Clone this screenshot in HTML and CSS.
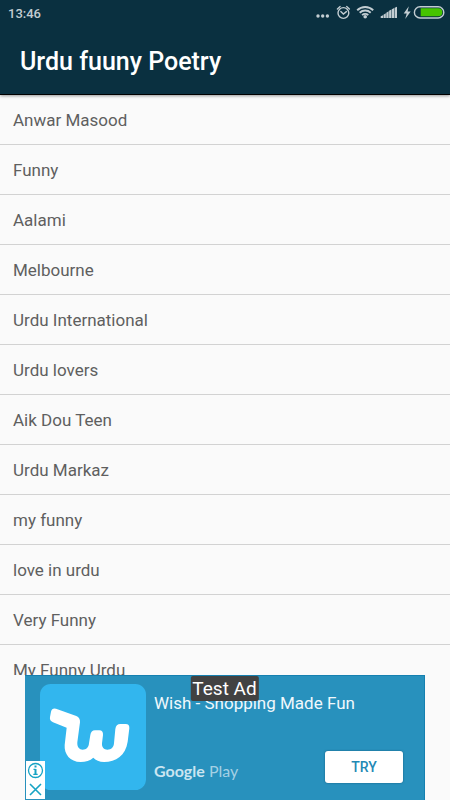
FILE: index.html
```html
<!DOCTYPE html>
<html lang="en">
<head>
<meta charset="utf-8">
<meta name="viewport" content="width=device-width, initial-scale=1">
<title>Urdu fuuny Poetry</title>
<link rel="stylesheet" href="styles.css">
</head>
<body>
<div class="screen">
  <header class="app-header">
    <div class="status-bar">
      <time class="clock">13:46</time>
      <svg class="status-icons" viewBox="0 0 132 24" role="img" aria-label="Alarm, Wi-Fi, signal, charging">
        <g fill="#c3cdd2">
          <circle cx="3" cy="15" r="1.700"/><circle cx="7.700" cy="15" r="1.700"/><circle cx="12.400" cy="15" r="1.700"/>
          <circle cx="50.200" cy="15.800" r="1.800"/>
          <path d="M65.700 17v-1.800l2.300-1V17zM68.500 17v-3.200l2.300-1.600V17zM71.300 17v-5.200l2.300-1.500V17zM74.100 17V9.800l2.300-1.300V17zM76.900 17V8.200l2.300-1.200V17zM79.700 17V6.700l2.300-1V17z"/>
          <path d="M93.800 5.300l-5.100 7.200h3L90.200 18l5.500-7.600h-3.100z"/>
        </g>
        <g fill="none" stroke="#c3cdd2" stroke-width="1.400" stroke-linecap="round">
          <circle cx="28.400" cy="12" r="5.400"/>
          <path d="M25.800 10.600l2.600 2.400 3-2.400M22.400 8l2.700-2.400M34.400 8l-2.700-2.400"/>
          <path stroke-width="1.900" stroke-linecap="butt" d="M42.200 9.200a11.500 11.500 0 0 1 16 0M44.700 11.700a8 8 0 0 1 11 0M47.100 14.100a4.600 4.600 0 0 1 6.200 0"/>
          <rect x="99.400" y="5.800" width="29.400" height="11.200" rx="5.600"/>
        </g>
        <path fill="#46c400" d="M105.700 7.300h17.600a4 4 0 0 1 0 8h-17.600z"/>
      </svg>
    </div>
    <h1 class="title">Urdu fuuny Poetry</h1>
  </header>
  <main class="content">
    <ul class="list">
      <li class="row">Anwar Masood</li>
      <li class="row">Funny</li>
      <li class="row">Aalami</li>
      <li class="row">Melbourne</li>
      <li class="row">Urdu International</li>
      <li class="row">Urdu lovers</li>
      <li class="row">Aik Dou Teen</li>
      <li class="row">Urdu Markaz</li>
      <li class="row">my funny</li>
      <li class="row">love in urdu</li>
      <li class="row">Very Funny</li>
      <li class="row">My Funny Urdu</li>
    </ul>
  </main>
  <aside class="ad">
    <svg class="ad-logo" viewBox="30 12 318 318" role="img" aria-label="Wish">
      <rect x="30" y="12" width="318" height="318" rx="32" fill="#32b6ee"/>
      <path fill="#fff" d="M69 127Q58 122 60 111L63 95Q66 83 78 86L139 108Q151 113 150 127L142 187C141 202 148 209 158 209C169 209 176 202 177 190L181 165Q183 151 195 151H208Q220 151 219 165L216 190C215 202 222 209 232 209C244 209 251 202 252 190L256 147Q258 132 271 132H287Q299 132 298 145L293 185C287 226 258 246 222 246C208 246 197 240 190 233C180 242 167 246 152 246C120 246 102 222 104 195L110 143Z"/>
    </svg>
    <div class="ad-body">
      <p class="ad-title">Wish - Shopping Made Fun</p>
      <div class="ad-actions">
        <span class="store"><span class="store-name">Google</span> Play</span>
        <button class="try" type="button">TRY</button>
      </div>
    </div>
    <span class="test-label">Test Ad</span>
    <div class="ad-choices">
      <button class="choice" type="button" aria-label="Ad information">
        <svg viewBox="0 0 19 19" fill="none" stroke="#16a3c4" stroke-width="1.300"><circle cx="9.500" cy="9.500" r="7"/><path stroke-width="2" d="M9.500 4.500v2M9.500 8v5.500"/><path d="M7.500 8.400h2M7.300 13.400h4.400"/></svg>
      </button>
      <button class="choice" type="button" aria-label="Close ad">
        <svg viewBox="0 0 19 19" fill="none" stroke="#16a3c4" stroke-width="1.600"><path d="M4 4l11 11M15 4L4 15"/></svg>
      </button>
    </div>
  </aside>
</div>
</body>
</html>
```
FILE: styles.css
```css
* {
  box-sizing: border-box;
}

body {
  margin: 0;
  background: #fafafa;
  font-family: Roboto, "Liberation Sans", sans-serif;
}

.screen {
  display: flex;
  flex-direction: column;
  height: 100vh;
}

.app-header {
  position: relative;
  background: #0a3040;
  border-bottom: 1px solid #000;
  box-shadow: 0 1px 3px rgba(0, 0, 0, 0.4);
  color: #fff;
}

.status-bar {
  display: flex;
  align-items: center;
  justify-content: space-between;
  height: 26px;
  padding: 0 3px 0 8px;
}

.clock {
  color: #c3cdd2;
  font-size: 13px;
  font-weight: 500;
}

.status-icons {
  width: 132px;
  height: 24px;
}

.title {
  margin: 0;
  padding: 20px 20px 16px;
  font-size: 25px;
  font-weight: 500;
  line-height: 32px;
}

.content {
  flex: 1;
  min-height: 0;
  overflow: hidden;
}

.list {
  margin: 0;
  padding: 0;
  list-style: none;
}

.row {
  height: 50px;
  padding: 0 13px;
  border-bottom: 1px solid #d2d2d2;
  color: #5f5f5f;
  font-size: 17px;
  line-height: 51px;
}

.ad {
  position: relative;
  display: flex;
  gap: 8px;
  margin: 0 25px;
  padding: 8px 21px 10px 15px;
  border: 1px solid #1580b0;
  border-width: 1px 1px 0 0;
  background: #2891bd;
}

.ad-logo {
  flex: none;
  width: 106px;
  height: 106px;
}

.ad-body {
  display: flex;
  flex: 1;
  flex-direction: column;
  justify-content: space-between;
  padding: 7px 0;
}

.ad-title {
  margin: 0;
  color: #f0f8fc;
  font-size: 17px;
  line-height: 24px;
}

.ad-actions {
  display: flex;
  align-items: flex-end;
  justify-content: space-between;
}

.store {
  color: #a4d0e4;
  font-family: Lato, sans-serif;
  font-size: 16px;
  line-height: 24px;
}

.store-name {
  color: #cbe5f1;
  font-weight: 700;
}

.try {
  width: 78px;
  height: 32px;
  border: 0;
  border-radius: 3px;
  background: #fff;
  box-shadow: 0 0 2px rgba(0, 50, 80, 0.6);
  color: #2389b5;
  font: 500 14px Roboto, sans-serif;
}

.test-label {
  position: absolute;
  top: 0;
  left: 50%;
  padding: 1px 2px 0;
  border-radius: 2px;
  background: #424242;
  color: #fff;
  font-size: 19px;
  line-height: 24px;
  white-space: nowrap;
  transform: translateX(-50%);
}

.ad-choices {
  position: absolute;
  bottom: 1px;
  left: 1px;
  display: flex;
  flex-direction: column;
  background: #fff;
}

.choice {
  width: 19px;
  height: 19px;
  padding: 0;
  border: 0;
  background: none;
}

.choice svg {
  display: block;
}
```
